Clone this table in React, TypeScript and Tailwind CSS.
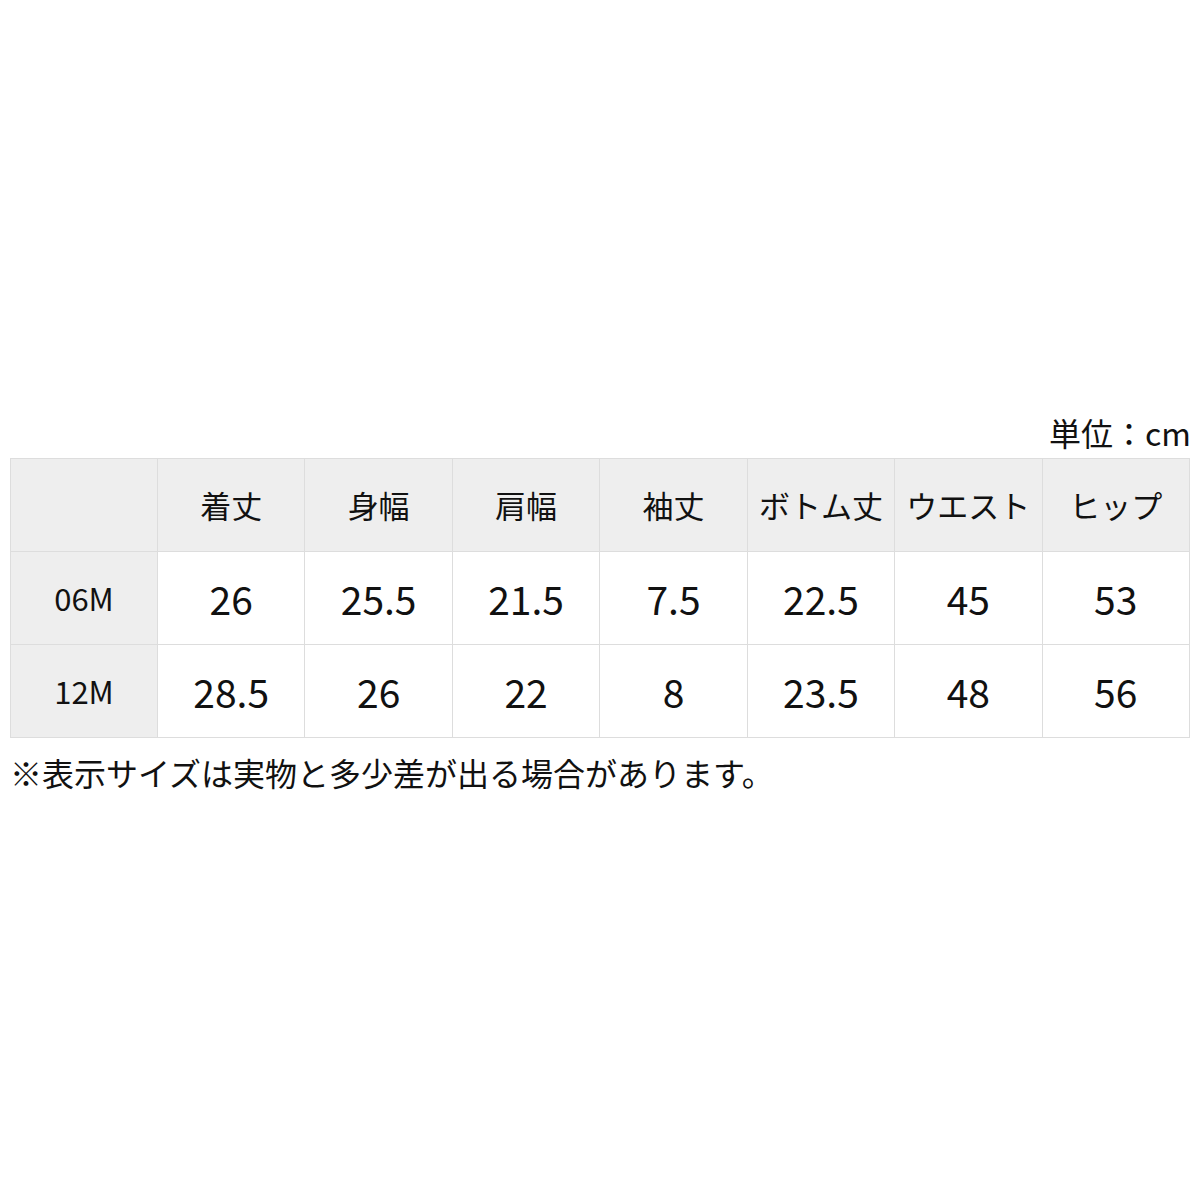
import React from 'react';

const headers = ['着丈', '身幅', '肩幅', '袖丈', 'ボトム丈', 'ウエスト', 'ヒップ'];

const rows = [
  { size: '06M', values: ['26', '25.5', '21.5', '7.5', '22.5', '45', '53'] },
  { size: '12M', values: ['28.5', '26', '22', '8', '23.5', '48', '56'] },
];

const App = () => {
  return (
    <div
      className="w-[1200px] h-[1200px] bg-white text-[#111] px-[10px] pt-[410px]"
      style={{ fontFamily: '"Noto Sans CJK JP", "Noto Sans", sans-serif' }}
    >
      <div className="text-right text-[32px] leading-[44px] h-[48px] -mr-[1px]">単位：cm</div>
      <table className="w-[1180px] table-fixed border-collapse">
        <thead>
          <tr className="h-[93px] bg-[#eeeeee]">
            <th className="border border-[#dddddd] w-[147px]"></th>
            {headers.map((h) => (
              <th key={h} className="border border-[#dddddd] text-[31px] font-normal">
                {h}
              </th>
            ))}
          </tr>
        </thead>
        <tbody>
          {rows.map((row) => (
            <tr key={row.size} className="h-[93px]">
              <td className="border border-[#dddddd] bg-[#eeeeee] text-center text-[31px]">
                {row.size}
              </td>
              {row.values.map((v, i) => (
                <td key={i} className="border border-[#dddddd] text-center text-[39px]">
                  {v}
                </td>
              ))}
            </tr>
          ))}
        </tbody>
      </table>
      <p className="text-[32px] leading-[44px] mt-[12px]">
        ※表示サイズは実物と多少差が出る場合があります。
      </p>
    </div>
  );
};

export default App;
